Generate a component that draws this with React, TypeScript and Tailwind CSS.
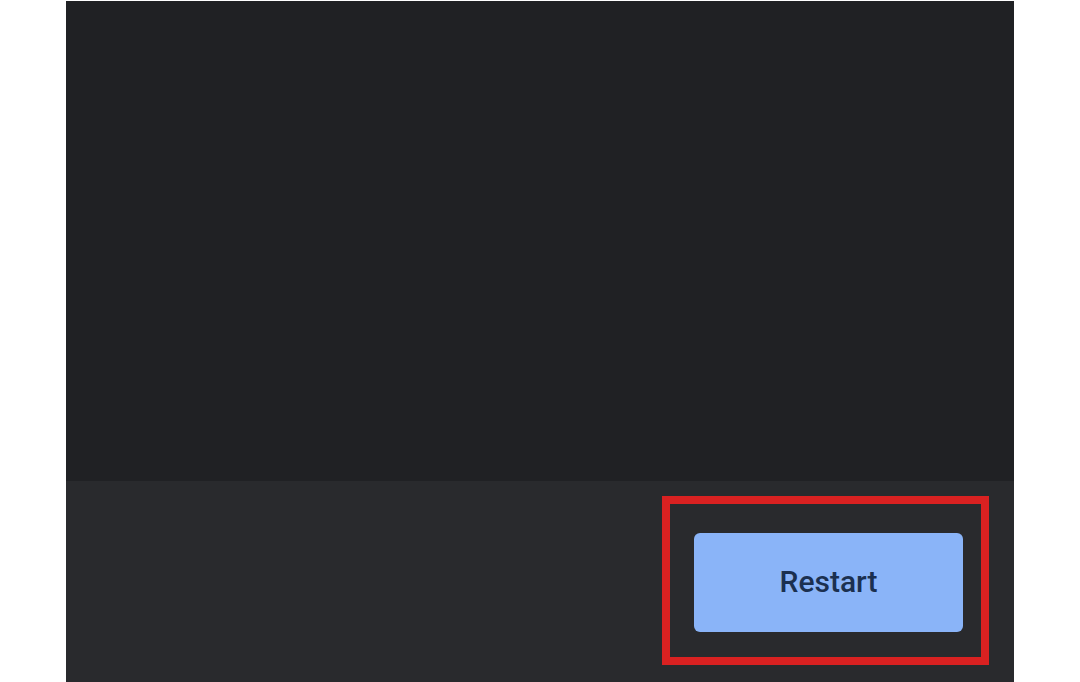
import React from "react";

export default function App() {
  return (
    <div className="w-[1080px] h-[682px] bg-white pt-px overflow-hidden" style={{ fontFamily: "Roboto, 'Liberation Sans', sans-serif" }}>
      <div className="ml-[66px] w-[948px] h-[681px] flex flex-col">
        <div className="h-[480px] bg-[#202124]" />
        <div className="flex-1 bg-[#292a2d] flex justify-end items-start pt-[15px] pr-[25px]">
          <div className="border-[8px] border-[#d92121] pl-[24px] pt-[29px] pr-[18px] pb-[25px]">
            <button className="w-[269px] h-[99px] rounded-[6px] bg-[#8ab4f8] text-[#1b3050] text-[30px] font-medium flex items-center justify-center pb-[3px]">
              Restart
            </button>
          </div>
        </div>
      </div>
    </div>
  );
}
